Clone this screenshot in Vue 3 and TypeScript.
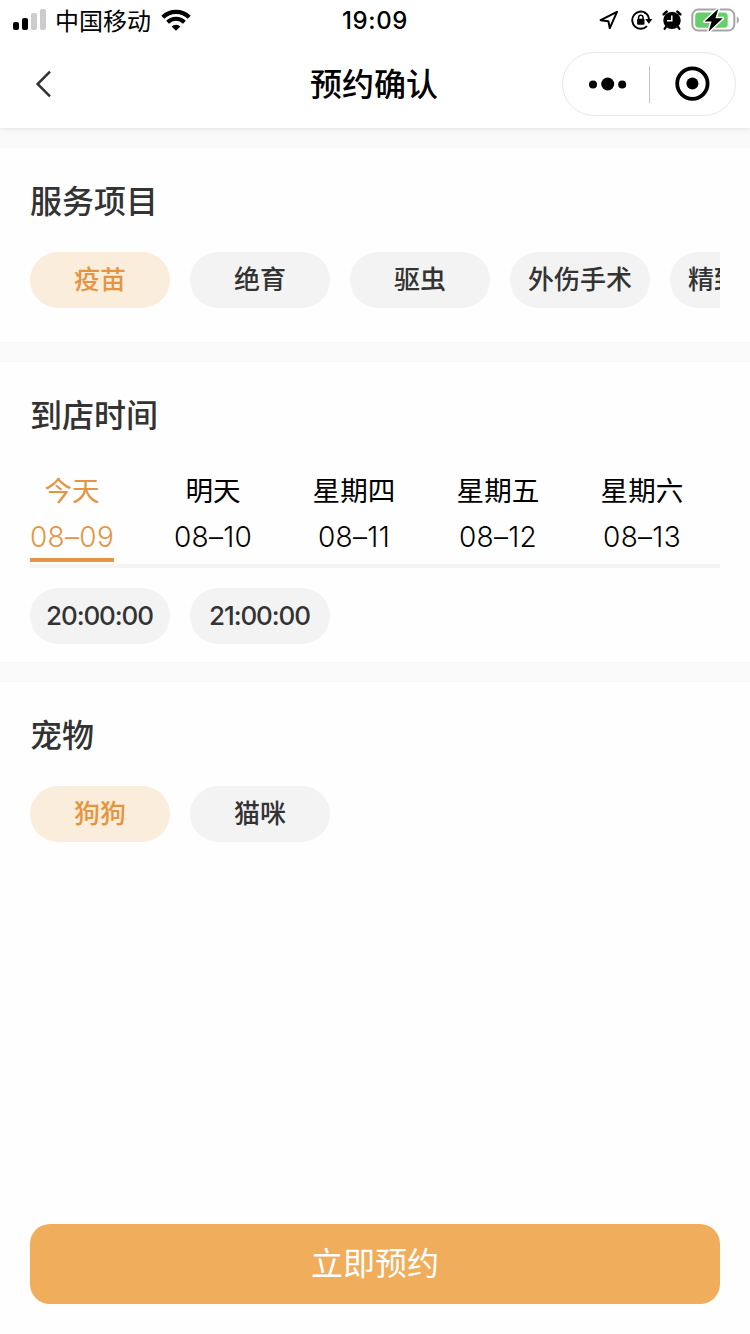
<script setup lang="ts">
import { ref } from 'vue'

interface Day {
  label: string
  date: string
  width: number
}

const services: string[] = ['疫苗', '绝育', '驱虫', '外伤手术', '精致洗护']
const days: Day[] = [
  { label: '今天', date: '08–09', width: 84 },
  { label: '明天', date: '08–10', width: 78 },
  { label: '星期四', date: '08–11', width: 84 },
  { label: '星期五', date: '08–12', width: 84 },
  { label: '星期六', date: '08–13', width: 84 },
]
const times: string[] = ['20:00:00', '21:00:00']
const pets: string[] = ['狗狗', '猫咪']

const service = ref(0)
const day = ref(0)
const time = ref(-1)
const pet = ref(0)
</script>

<template>
  <div class="page">
    <header class="top">
      <div class="status">
        <div class="status-left">
          <svg class="signal" width="34" height="22" viewBox="0 0 34 22">
            <rect x="0" y="13" width="6" height="8" rx="2" fill="#000" />
            <rect x="9" y="9" width="6" height="12" rx="2" fill="#000" />
            <rect x="18" y="4" width="6" height="17" rx="2" fill="#ccc" />
            <rect x="27" y="0" width="6" height="21" rx="2" fill="#ccc" />
          </svg>
          <span class="carrier">中国移动</span>
          <svg class="wifi" width="30" height="22" viewBox="0 0 30 22">
            <path d="M1.8 8.2 A19 19 0 0 1 28.2 8.2" fill="none" stroke="#000" stroke-width="4.3" />
            <path d="M6.6 13.2 A12 12 0 0 1 23.4 13.2" fill="none" stroke="#000" stroke-width="4" />
            <path d="M10.6 17.4 A6.6 6.6 0 0 1 19.4 17.4 L15 21.8 Z" fill="#000" />
          </svg>
        </div>
        <span class="clock">19:09</span>
        <div class="status-right">
          <svg width="20" height="20" viewBox="0 0 20 20">
            <path d="M1.6 10.2 L18 1.8 L10.8 18.2 L9.4 11.2 Z" fill="none" stroke="#000" stroke-width="2" stroke-linejoin="round" />
          </svg>
          <svg class="lock" width="22" height="20" viewBox="0 0 22 20">
            <path d="M14.6 3 A8.6 8.6 0 1 0 16 16.2" fill="none" stroke="#000" stroke-width="1.9" />
            <path d="M13.4 2.3 A8.6 8.6 0 0 1 18 10" fill="none" stroke="#000" stroke-width="1.9" />
            <path d="M14.2 9 H21.4 L17.8 13.8 Z" fill="#000" />
            <rect x="6.1" y="8.8" width="7.4" height="6" rx="1" fill="#000" />
            <path d="M7.6 9 V7.4 A2.2 2.2 0 0 1 12 7.4 V9" fill="none" stroke="#000" stroke-width="1.5" />
          </svg>
          <svg class="alarm" width="20" height="20" viewBox="0 0 20 20">
            <circle cx="10" cy="10.4" r="8.7" fill="#000" />
            <path d="M1.7 4.4 L4.6 1.6 M18.3 4.4 L15.4 1.6" stroke="#000" stroke-width="2.6" stroke-linecap="round" />
            <path d="M4.2 16.5 L2.6 18.8 M15.8 16.5 L17.4 18.8" stroke="#000" stroke-width="2.2" stroke-linecap="round" />
            <path d="M9.8 5.4 V10.8 H5" fill="none" stroke="#fff" stroke-width="1.5" />
          </svg>
          <svg class="battery" width="50" height="28" viewBox="0 0 50 28">
            <rect x="1.3" y="3.6" width="42" height="21" rx="6" fill="#fff" stroke="#a5a5a5" stroke-width="2" />
            <rect x="4.2" y="6.5" width="32.5" height="15.2" rx="3.5" fill="#65cf6a" />
            <path d="M45.8 10.4 Q48 11.2 48 14.1 Q48 17 45.8 17.8 Z" fill="#a5a5a5" />
            <path d="M27.4 2.8 L13.6 15.6 H20.6 L17.6 25.6 L31.8 12.2 H24.4 Z" fill="#000" stroke="#fff" stroke-width="3" stroke-linejoin="round" paint-order="stroke" />
          </svg>
        </div>
      </div>
      <nav class="nav">
        <svg class="back" width="18" height="30" viewBox="0 0 18 30">
          <path d="M16 2.6 L3.6 15 L16 27.4" fill="none" stroke="#333" stroke-width="2.5" />
        </svg>
        <h1 class="nav-title">预约确认</h1>
        <div class="capsule">
          <svg class="dots" width="40" height="16" viewBox="0 0 40 16">
            <circle cx="5" cy="8.5" r="4" />
            <circle cx="19.7" cy="8" r="6.5" />
            <circle cx="34.2" cy="8.5" r="4" />
          </svg>
          <span class="divider"></span>
          <svg class="target" width="36" height="36" viewBox="0 0 36 36">
            <circle cx="18.4" cy="17.6" r="15.2" fill="none" stroke="#000" stroke-width="3.8" />
            <circle cx="18.4" cy="17.6" r="6" />
          </svg>
        </div>
      </nav>
    </header>

    <section class="block services">
      <h2>服务项目</h2>
      <div class="chips">
        <button v-for="(s, i) in services" :key="s" class="chip" :class="{ on: i === service }" @click="service = i">{{ s }}</button>
      </div>
    </section>

    <section class="block arrival">
      <h2>到店时间</h2>
      <div class="days">
        <div v-for="(d, i) in days" :key="d.date" class="day" :class="{ on: i === day }" :style="{ width: d.width + 'px' }" @click="day = i">
          <span class="day-label">{{ d.label }}</span>
          <span class="day-date">{{ d.date }}</span>
        </div>
      </div>
      <div class="chips">
        <button v-for="(t, i) in times" :key="t" class="chip time" :class="{ on: i === time }" @click="time = i">{{ t }}</button>
      </div>
    </section>

    <section class="block pets">
      <h2>宠物</h2>
      <div class="chips">
        <button v-for="(p, i) in pets" :key="p" class="chip" :class="{ on: i === pet }" @click="pet = i">{{ p }}</button>
      </div>
    </section>

    <footer class="footer">
      <button class="submit">立即预约</button>
    </footer>
  </div>
</template>

<style>
body {
  margin: 0;
  background: #fff;
}
</style>

<style scoped>
.page {
  display: flex;
  flex-direction: column;
  box-sizing: border-box;
  width: 750px;
  height: 1334px;
  overflow: hidden;
  background: #fefefe;
  color: #333;
  font-family: Inter, 'Noto Sans CJK SC', sans-serif;
}
.top {
  height: 128px;
  flex: none;
  background: #fff;
  box-shadow: 0 1px 4px rgba(0, 0, 0, 0.09);
  z-index: 1;
}
.status {
  display: grid;
  grid-template-columns: 1fr auto 1fr;
  align-items: center;
  height: 40px;
  padding: 0 9px 0 13px;
  color: #000;
}
.status-left,
.status-right {
  display: flex;
  align-items: center;
}
.status-right {
  justify-content: flex-end;
}
.carrier {
  margin-left: 8px;
  padding-top: 3px;
  font-size: 24px;
  line-height: 37px;
}
.wifi {
  margin-left: 10px;
}
.clock {
  padding: 2px 4px 0 0;
  font-size: 24px;
  font-weight: 500;
  line-height: 38px;
  letter-spacing: 0.6px;
}
.lock {
  margin-left: 12px;
}
.alarm {
  margin-left: 9px;
}
.battery {
  margin-left: 9px;
}
.nav {
  display: grid;
  grid-template-columns: 1fr auto 1fr;
  align-items: center;
  height: 88px;
  padding: 0 14px 0 34px;
}
.nav-title {
  margin: 0;
  padding: 2px 22px 0 0;
  font-size: 32px;
  font-weight: 500;
  line-height: 48px;
  color: #000;
}
.capsule {
  display: flex;
  align-items: center;
  justify-self: end;
  box-sizing: border-box;
  width: 174px;
  height: 64px;
  padding-left: 25px;
  border: 1px solid #e8e8e8;
  border-radius: 32px;
}
.divider {
  width: 1px;
  height: 37px;
  margin: 0 24px 0 21px;
  background: #c4c4c4;
}
.block {
  flex: none;
  box-sizing: border-box;
  padding: 30px 30px 0;
  border-top: 20px solid #f9f9f9;
}
.services {
  height: 214px;
}
.arrival {
  height: 320px;
}
h2 {
  margin: 0 0 26px;
  font-size: 32px;
  font-weight: 500;
  line-height: 48px;
}
.chips {
  display: flex;
  gap: 20px;
  overflow: hidden;
}
.chip {
  flex: none;
  width: 140px;
  height: 56px;
  padding: 0;
  border: 0;
  border-radius: 28px;
  background: #f3f3f3;
  color: #333;
  font: 500 26px/56px Inter, 'Noto Sans CJK SC', sans-serif;
}
.chip.on {
  background: #fbeddb;
  color: #e59542;
}
.chip.time {
  padding-right: 1px;
  letter-spacing: -1.1px;
}
.days {
  display: flex;
  gap: 60px;
  height: 98px;
  margin-bottom: 20px;
  border-bottom: 4px solid #f4f4f4;
}
.day {
  display: flex;
  flex-direction: column;
  align-items: center;
  box-sizing: border-box;
  height: 96px;
  padding-top: 2px;
  font-size: 28px;
  color: #000;
  white-space: nowrap;
}
.day.on {
  border-bottom: 4px solid #e59542;
  color: #e59542;
}
.day-label {
  font-size: 27.6px;
  line-height: 46px;
}
.day-date {
  font-weight: 300;
  line-height: 46px;
  letter-spacing: 0.3px;
}
.footer {
  margin-top: auto;
  padding: 0 30px 30px;
}
.submit {
  display: block;
  width: 100%;
  height: 80px;
  padding: 0;
  border: 0;
  border-radius: 20px;
  background: #f0ad5b;
  color: #fff;
  font: 400 32px/80px Inter, 'Noto Sans CJK SC', sans-serif;
}
</style>
